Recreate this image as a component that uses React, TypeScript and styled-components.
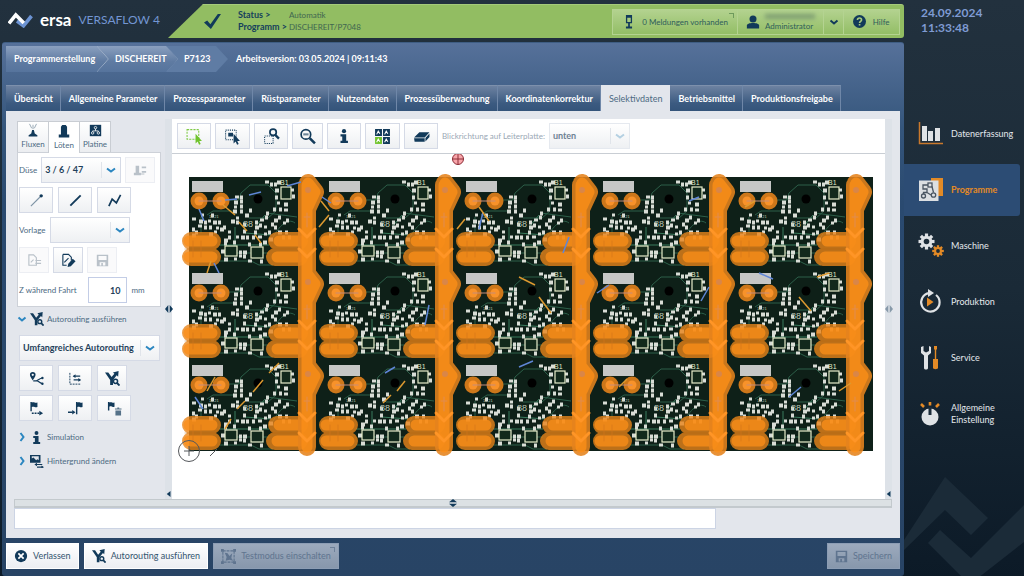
import React from "react";
import styled, { createGlobalStyle, css } from "styled-components";

const navy = "#123a5a";
const blue = "#2b86c0";

const GlobalStyle = createGlobalStyle`
  *, *::before, *::after { box-sizing: border-box; }
  body {
    margin: 0;
    background: #14222f;
    font-family: Lato, "Liberation Sans", sans-serif;
    font-size: 9px;
    line-height: 12px;
    color: #4c6a82;
  }
  button, input, select { font: inherit; color: inherit; margin: 0; }
  svg { display: block; flex: none; }
`;

/* ---------- Shell ---------- */

const Shell = styled.div`
  display: grid;
  grid-template-columns: minmax(0, 1fr) 120px;
  min-height: 100vh;
  background: linear-gradient(#22313e, #1a2a37 50%, #0c1a27);
`;

const MainColumn = styled.div`
  display: flex;
  flex-direction: column;
  min-width: 0;
  padding: 4px 0 2px 2px;
`;

const Header = styled.header`
  display: flex;
  height: 34px;
  margin-bottom: 4px;
`;

const Brand = styled.div`
  display: flex;
  align-items: center;
  width: 166px;
  padding-left: 6px;
  padding-bottom: 2px;
  color: #fff;
  font-size: 17px;
  line-height: 20px;
  font-weight: 700;
  white-space: nowrap;
`;

const BrandName = styled.span`
  margin: 0 7px;
`;

const Product = styled.span`
  color: #7396d2;
  font-size: 12px;
  font-weight: 400;
`;

const StatusBar = styled.div`
  flex: 1;
  display: flex;
  align-items: center;
  padding: 0 4px 0 36px;
  background: #92bd62;
  border-top: 1px solid #a5ca7b;
  border-radius: 0 3px 3px 0;
  clip-path: polygon(35px 0, 100% 0, 100% 100%, 0 100%);
`;

const StatusList = styled.dl`
  display: grid;
  grid-template-columns: 51px auto;
  margin: 0 auto 0 17px;
  padding-bottom: 2px;
  color: #3f6650;

  dt { color: #153f5c; font-weight: 700; white-space: nowrap; }
  dd { margin: 0; font-size: 8px; }
`;

const HeaderTools = styled.div`
  display: flex;
  height: 26px;
  border: 1px solid #b4d391;
  background: linear-gradient(#b3d28f, #93be66);
`;

const HeaderButton = styled.button<{ $width: number }>`
  position: relative;
  display: flex;
  align-items: center;
  justify-content: space-evenly;
  width: ${(p) => p.$width}px;
  padding: 0 3px;
  border: 0;
  border-left: 1px solid #b4d391;
  background: none;
  color: #2f5d5a;
  font-size: 8px;
  text-align: left;
  white-space: nowrap;

  &:first-child { border-left: 0; }
`;

const CornerMark = styled.span<{ $tone: string }>`
  position: absolute;
  top: 3px;
  right: 3px;
  width: 5px;
  height: 5px;
  border: solid ${(p) => p.$tone};
  border-width: 1px 1px 0 0;
`;

const HiddenName = styled.span`
  display: block;
  width: 50px;
  height: 5px;
  margin: 2px 0 1px;
  background: #7f9f72;
  filter: blur(2px);
`;

const Window = styled.main`
  flex: 1;
  display: flex;
  flex-direction: column;
  padding: 3px 4px 7px;
  border-radius: 3px;
  background: linear-gradient(#56719a, #35567c 16%, #2a4a70 30%, #284465);
  border: solid #3f5e84;
  border-width: 1px 0 0;
`;

/* ---------- Breadcrumb and tabs ---------- */

const Breadcrumb = styled.nav`
  display: flex;
  align-items: center;
  height: 26px;
  margin-bottom: 13px;
  color: #fff;
  font-weight: 700;
`;

const Crumb = styled.a<{ $width: number; $level: number }>`
  display: flex;
  align-items: center;
  justify-content: space-between;
  width: ${(p) => p.$width}px;
  height: 26px;
  margin-right: -12px;
  padding-left: ${(p) => (p.$level === 0 ? 8 : 18)}px;
  z-index: ${(p) => 3 - p.$level};
  color: #fff;
  text-decoration: none;
  background: ${(p) =>
    p.$level === 2 ? "#5f7ca4" : "linear-gradient(#8ba0bf, #5f7ba2 60%, #56749d)"};
  clip-path: polygon(0 0, calc(100% - 12px) 0, 100% 50%, calc(100% - 12px) 100%, 0 100%);
`;

const Version = styled.span`
  margin-left: 20px;
`;

const TabBar = styled.div`
  display: flex;
  height: 26px;
`;

const Tab = styled.button<{ $active?: boolean }>`
  padding: 0 7px 0 8px;
  border: 0;
  border-top: 1px solid #7d90ac;
  border-right: 1px solid #6f87a8;
  background: linear-gradient(#6d82a1, #3b5a80 70%, #34547a);
  color: #fff;
  font-weight: 700;
  white-space: nowrap;

  ${(p) =>
    p.$active &&
    css`
      background: #e3e6ec;
      border-color: #e3e6ec;
      color: #4c6a82;
      font-weight: 400;
    `}
`;

/* ---------- Work area ---------- */

const Content = styled.section`
  flex: 1;
  display: flex;
  flex-direction: column;
  padding: 8px 8px 9px;
  background: #e3e6ec;
`;

const Workspace = styled.div`
  flex: 1;
  display: grid;
  grid-template-columns: 151px 7px minmax(0, 1fr) 7px;
`;

const Splitter = styled.div`
  position: relative;
  display: flex;
  align-items: center;
  justify-content: center;
  background: #dde2e8;
`;

const SplitterEnd = styled.span`
  position: absolute;
  bottom: 2px;
  left: 1px;
`;

const SidePanel = styled.aside`
  padding: 2px 4px 0 3px;
`;

const ToolTabs = styled.div`
  display: flex;
  height: 31px;
`;

const ToolTab = styled.button<{ $active?: boolean }>`
  display: flex;
  flex-direction: column;
  align-items: center;
  justify-content: flex-end;
  gap: 1px;
  width: 32px;
  height: ${(p) => (p.$active ? 32 : 31)}px;
  padding: 0 0 2px;
  border: 1px solid #c9cdd3;
  border-bottom: 0;
  margin-right: -1px;
  background: ${(p) => (p.$active ? "#fff" : "linear-gradient(#fff, #eceef1)")};
  z-index: ${(p) => (p.$active ? 1 : 0)};
  font-size: 8px;

  svg { color: ${navy}; }
`;

const ToolBox = styled.div`
  display: flex;
  flex-direction: column;
  gap: 4px;
  padding: 4px 1px 3px;
  border: 1px solid #cdd1d8;
  background: #fff;
`;

const Row = styled.div<{ $gap?: number }>`
  display: flex;
  align-items: center;
  gap: ${(p) => p.$gap ?? 5}px;
  min-height: 26px;
  font-size: 8px;
`;

const IconButton = styled.button<{ $width?: number }>`
  display: flex;
  flex: none;
  align-items: center;
  justify-content: center;
  width: ${(p) => p.$width ?? 34}px;
  height: 26px;
  padding: 0;
  border: 1px solid #d5dae6;
  background: linear-gradient(#fff, #eef0f3);
  color: ${navy};

  &:disabled { border-color: #eceef3; background: #fafafb; color: #b9c1c9; }
`;

const SelectBox = styled.span<{ $width: number }>`
  display: grid;
  grid-template-columns: minmax(0, 1fr) 20px;
  align-items: center;
  justify-items: center;
  width: ${(p) => p.$width}px;
  height: 26px;

  select {
    grid-area: 1 / 1 / 2 / 3;
    width: 100%;
    height: 100%;
    padding: 0 22px 0 3px;
    appearance: none;
    border: 1px solid #d5dae6;
    border-radius: 0;
    background: linear-gradient(#fff, #eef0f3);
    color: #1f3f5a;
    font-size: 9px;
    font-weight: 700;
    opacity: 1;
  }

  select:disabled { color: #6e8294; border-color: #e5e9ef; }

  svg { grid-area: 1 / 2; pointer-events: none; }
`;

const DepthInput = styled.input`
  width: 39px;
  height: 26px;
  margin-left: 6px;
  padding: 0 5px;
  border: 1px solid #c3cde6;
  background: #fff;
  color: #1f3f5a;
  font-size: 9px;
  font-weight: 700;
  text-align: right;
`;

const Disclosure = styled.button`
  display: grid;
  grid-template-columns: 10px 14px auto;
  gap: 3px;
  align-items: center;
  justify-content: start;
  width: 100%;
  height: 24px;
  padding: 0;
  border: 0;
  background: none;
  font-size: 8px;

  svg { color: ${navy}; }
`;

const RoutingTools = styled.div`
  display: flex;
  flex-direction: column;
  gap: 4px;
  padding: 4px 0 4px 2px;
`;

/* ---------- Board view ---------- */

const BoardView = styled.div`
  display: flex;
  flex-direction: column;
  background: #fff;
`;

const BoardToolbar = styled.div`
  display: flex;
  align-items: center;
  gap: 4px;
  height: 35px;
  padding: 0 5px;
  border-bottom: 1px solid #c9ced4;
  font-size: 8px;
  color: #9aa8b5;
  white-space: nowrap;
`;

const BoardCanvas = styled.svg`
  width: 100%;
  height: auto;
`;

const MessageSplitter = styled.div`
  display: flex;
  align-items: center;
  justify-content: center;
  height: 9px;
  border: 1px solid #c3c9cd;
  border-bottom-width: 2px;
  background: #dce1e4;
`;

const MessageInput = styled.input`
  width: 80%;
  height: 21px;
  padding: 0 5px;
  border: 1px solid #ccd4e4;
  background: #fff;
`;

const Footer = styled.footer`
  display: flex;
  gap: 5px;
  padding-top: 5px;
`;

const FooterButton = styled.button`
  position: relative;
  display: flex;
  align-items: center;
  gap: 5px;
  height: 26px;
  padding: 0 7px;
  border: 1px solid #fff;
  background: linear-gradient(#fff, #eceef2);
  color: #34556f;
  white-space: nowrap;

  svg { color: ${navy}; }
  &:disabled svg { color: inherit; }
  &:disabled { border-color: #8c9db4; background: linear-gradient(#9caabd, #8797ac); color: #5f748f; }
  &:last-child { margin-left: auto; }
`;

/* ---------- Right navigation ---------- */

const Sidebar = styled.aside`
  display: flex;
  flex-direction: column;
`;

const Clock = styled.time`
  height: 108px;
  padding: 5px 0 0 17px;
  color: #7f9bd3;
  font-size: 12px;
  line-height: 15px;
  font-weight: 700;

  span { display: block; }
`;

const NavList = styled.nav`
  display: flex;
  flex-direction: column;
  gap: 4px;
  padding-right: 4px;
`;

const NavLink = styled.a<{ $active?: boolean }>`
  display: grid;
  grid-template-columns: 26px 1fr;
  gap: 7px;
  align-items: center;
  height: 52px;
  padding-left: 14px;
  border-radius: 0 3px 3px 0;
  background: ${(p) => (p.$active ? "#2c4c74" : "none")};
  color: ${(p) => (p.$active ? "#e38a26" : "#e4e8ec")};
  font-weight: ${(p) => (p.$active ? 700 : 400)};
  text-decoration: none;
`;

const Watermark = styled.svg`
  width: 100%;
  margin-top: auto;
`;

/* ---------- Icons ---------- */

const Ico = ({
  s = 14,
  v = 16,
  c = "currentColor",
  children,
}: {
  s?: number;
  v?: number;
  c?: string;
  children: React.ReactNode;
}) => (
  <svg width={s} height={s} viewBox={`0 0 ${v} ${v}`} fill={c} aria-hidden="true">
    {children}
  </svg>
);

const line = { fill: "none", stroke: "currentColor", strokeWidth: 1.6 };

const Chevron = ({ dir = "down", c = blue, s = 10 }: { dir?: string; c?: string; s?: number }) => (
  <Ico s={s} v={10}>
    <path
      d={dir === "down" ? "M1.5 3.5 5 6.5 8.5 3.5" : "M3.5 1 6.5 5 3.5 9"}
      fill="none"
      stroke={c}
      strokeWidth="2"
    />
  </Ico>
);

const CrumbEdge = () => (
  <svg width="12" height="26" viewBox="0 0 12 26" aria-hidden="true">
    <path d="M0 0 11.500 13 0 26" fill="none" stroke="#a3b4cb" />
  </svg>
);

const SelectArrow = ({ c }: { c?: string }) => (
  <svg width="20" height="16" viewBox="0 0 20 16" aria-hidden="true">
    <path d="M.5 0V16" stroke="#e0e4ea" />
    <path d="M6 6.500 10 9.500 14 6.500" fill="none" stroke={c ?? blue} strokeWidth="2" />
  </svg>
);

const RouteIcon = ({ s = 14 }: { s?: number }) => (
  <Ico s={s}>
    <path d="M0 1.500h3.500L7 6.500l3-3.500-1.500-1.500L14.500 0 14 6l-1.500-1.500L8.500 9.500V15H5.500V9.500z" />
    <circle cx="11.200" cy="11" r="2.200" {...line} />
    <path d="m12.800 12.800 2.700 2.700" {...line} strokeWidth="2" />
  </Ico>
);

const InfoIcon = ({ s = 13 }: { s?: number }) => (
  <Ico s={s}>
    <circle cx="8" cy="2.500" r="2.400" />
    <path d="M4 6h6.500v7.500h2V16H4v-2.500h2V8.500H4z" />
  </Ico>
);

const SaveIcon = () => (
  <Ico s={13}>
    <path d="M1 1h14v14H1zm2 1.500v5h10v-5zm1.500 7.500v4h2v-3h2v3h3v-4z" fillRule="evenodd" />
  </Ico>
);

const FluxIcon = () => (
  <Ico s={14}>
    <path d="M7 8h2l1 4 3 2v1.500H3V14l3-2z" />
    <path d="M8 7V2M6.500 6 4 1M9.500 6 12 1" fill="none" stroke="#8ea0ae" />
  </Ico>
);

const SolderIcon = () => (
  <Ico s={14}>
    <path d="M4.500 3 6 1h4l1.500 2v9H14v3.500H2V12h2.500z" />
  </Ico>
);

const BoardIcon = () => (
  <Ico s={13}>
    <path d="M1 1h14v14H1z" />
    <g fill="none" stroke="#fff">
      <circle cx="8" cy="4.500" r="1.500" />
      <circle cx="4.500" cy="11" r="1.500" />
      <circle cx="11.500" cy="11" r="1.500" />
      <path d="M8 6v2.500H4.500v1M8 8.500h3.500v1" />
    </g>
  </Ico>
);

const NozzleSwapIcon = () => (
  <Ico s={14}>
    <path d="M3 3h4v8h2v3H1v-3h2zM10 4h5v2h-5zM10 9h5v2h-5zM9 12h4v1H9z" />
  </Ico>
);

const PointLineIcon = () => (
  <Ico s={15}>
    <path d="M2 14 12 4" fill="none" stroke="#7d93a5" strokeWidth="1.200" />
    <circle cx="13" cy="3" r="1.800" />
  </Ico>
);

const LineIcon = () => (
  <Ico s={15}>
    <path d="M2.500 13.500 13.500 2.500" {...line} strokeWidth="2" />
  </Ico>
);

const PolylineIcon = () => (
  <Ico s={15}>
    <path d="M2 14 5.500 6.500 10 10.500 14.500 2" {...line} strokeWidth="1.800" />
  </Ico>
);

const DocSwapIcon = () => (
  <Ico s={15}>
    <path d="M2 2h5l3 3v8H2z" {...line} strokeWidth="1.200" />
    <path d="M9 8h6M9 11h6M4 10l3-3" {...line} strokeWidth="1.200" />
  </Ico>
);

const DocEditIcon = () => (
  <Ico s={15}>
    <path d="M2 1.500h6l3 3V8M2 1.500V13h4" {...line} strokeWidth="1.200" />
    <path d="M3.500 10 8 5.500" {...line} strokeWidth="1.200" />
    <path d="m7 15 .8-3.500L12.500 6l3 2.700-5 5.300z" />
  </Ico>
);

const PinRouteIcon = () => (
  <Ico s={15}>
    <path d="M4 1a3 3 0 0 1 3 3c0 2-3 6-3 6S1 6 1 4a3 3 0 0 1 3-3zm0 1.800a1.200 1.200 0 1 0 0 2.400 1.200 1.200 0 0 0 0-2.400z" fillRule="evenodd" />
    <path d="M4.500 10.500h3c2 0 3.500-3 7-3M8.500 10.500c2 0 3 3 6 3" {...line} strokeWidth="1.200" />
    <circle cx="14.300" cy="7.500" r="1.300" />
    <circle cx="14.300" cy="13.500" r="1.300" />
  </Ico>
);

const AxisSwapIcon = () => (
  <Ico s={15}>
    <path d="M2 2v12h12" {...line} strokeWidth="1" strokeDasharray="2 1" />
    <path d="M6 5.500h7M6 9.500h7" {...line} strokeWidth="1.200" />
    <path d="M5 5.500 8 3.500v4zM14 9.500l-3-2v4z" />
  </Ico>
);

const FlagIcon = ({ kind }: { kind: "start" | "end" | "delete" }) => (
  <Ico s={15}>
    {kind === "start" && (
      <>
        <path d="M1.500 1H3v10H1.500zM3 1.500c3-1 3 1 6 0v5c-3 1-3-1-6 0z" />
        <path d="M3 13h9" {...line} strokeDasharray="2 1" />
        <path d="m15 13-4-2.500v5z" />
      </>
    )}
    {kind === "end" && (
      <>
        <path d="M8.500 1H10v13H8.500zM10 1.500c3-1 3 1 5.500 0v5c-3 1-3-1-5.500 0z" />
        <path d="M0 12h5" {...line} />
        <path d="m8 12-3.500-2.500v5z" />
      </>
    )}
    {kind === "delete" && (
      <>
        <path d="M1 1h1.500v9H1zM2.500 1.500c3-1 3 1 5.500 0v4.500c-3 1-3-1-5.500 0z" />
        <path d="M8.500 8h7v1h-7zM9 10h6v5.500H9zM11 7h2v1h-2z" opacity=".7" />
      </>
    )}
  </Ico>
);

const ImageSwapIcon = () => (
  <Ico s={14}>
    <path d="M0 1h12v9H0zm2 1.500V5l2-1 3 3 1.500-1L10 7V2.500z" fillRule="evenodd" />
    <path d="M7 12h7M8 15h7" {...line} strokeWidth="1.200" />
    <path d="m5 12 3-2v4zM16 15l-3-2v3z" />
  </Ico>
);

const Pointer = ({ c }: { c?: string }) => (
  <path d="M9 5.500v9l2-1.700 1.300 2.900 1.500-.7-1.300-2.800H15z" fill={c ?? "currentColor"} />
);

const SelectIcon = () => (
  <Ico s={17} c="#6fc32b">
    <path d="M1 1.500h11v9H1z" fill="none" stroke="#7fca45" strokeDasharray="2 1" />
    <Pointer c="#6fc32b" />
  </Ico>
);

const SelectPartIcon = () => (
  <Ico s={17}>
    <path d="M1.500 2h10v9h-10z" fill="none" stroke="currentColor" strokeDasharray="1 1" />
    <path d="M4 4.500h4.500v3.500H4z" />
    <Pointer />
  </Ico>
);

const ZoomAreaIcon = () => (
  <Ico s={17}>
    <path d="M1.500 7.500h8v7h-8z" fill="none" stroke="currentColor" strokeDasharray="1 1" />
    <circle cx="9.500" cy="4" r="3" {...line} />
    <path d="m11.500 6.500 3.500 3.500" {...line} strokeWidth="2.200" />
  </Ico>
);

const ZoomFitIcon = () => (
  <Ico s={17}>
    <circle cx="6.500" cy="6" r="4.500" {...line} />
    <path d="m10 9.500 5 5" {...line} strokeWidth="2.400" />
    <path d="M4 6h5" {...line} strokeWidth="2" opacity=".6" />
  </Ico>
);

const PanelIcon = () => (
  <Ico s={17}>
    <path d="M1 1h6.500v6.500H1zM8.500 1H15v6.500H8.500zM8.500 8.500H15V15H8.500z" />
    <path d="M1 8.500h6.500V15H1z" fill="#6fc32b" />
    <path
      d="M2.500 6 4 3l1.500 2.500M10 6l1.500-3L13 5.500M10 13.500l1.500-3L13 13M2.500 13.500l1.500-3L5.500 13"
      fill="none"
      stroke="#fff"
    />
  </Ico>
);

const EraserIcon = () => (
  <Ico s={17}>
    <path d="M6 4h9.500l-4.500 5H1zM1 9.600h10v3.400H1.500zM11.700 9.500l3.800-4.300v3.300l-3.800 4.300z" />
  </Ico>
);

const CloseIcon = () => (
  <Ico s={14}>
    <circle cx="8" cy="8" r="7" />
    <path d="m5 5 6 6m0-6-6 6" stroke="#fff" strokeWidth="2" />
  </Ico>
);

const TestIcon = () => (
  <Ico s={15}>
    <path d="M2 2h12v12H2z" {...line} strokeDasharray="3 1" strokeWidth="1.200" />
    <path d="M0 0h3v3H0zM13 0h3v3h-3zM0 13h3v3H0zM13 13h3v3h-3zM4 4l3 .5 2 3 3-3-1 5 2 3-4-1-4 1 1-4z" />
  </Ico>
);

const Arrows = ({ dir, c = navy }: { dir: "h" | "v"; c?: string }) => (
  <Ico s={8} v={8} c={c}>
    {dir === "h" ? (
      <path d="M3.300 0v8L0 4zM4.700 0v8L8 4z" />
    ) : (
      <path d="M0 3.300h8L4 0zM0 4.700h8L4 8z" />
    )}
  </Ico>
);

const LogoIcon = () => (
  <svg width="25" height="16" viewBox="0 0 25 16" aria-hidden="true">
    <path d="m9 9 6.500 4.800L23.500 4" fill="none" stroke="#6c93d3" strokeWidth="3.600" />
    <path d="M1 11.500 7.800 3l8 8" fill="none" stroke="#fff" strokeWidth="3.600" />
  </svg>
);

const gearTeeth = (cx: number, cy: number, r: number) =>
  [0, 45, 90, 135].map((a) => (
    <rect
      key={a}
      x={cx - r / 5}
      y={cy - r}
      width={(r / 5) * 2}
      height={r * 2}
      transform={`rotate(${a} ${cx} ${cy})`}
    />
  ));

const navIcons: Record<string, React.ReactNode> = {
  data: (
    <Ico s={26} v={26} c="#dfe2e5">
      <path d="M4 5h5v15H4zM10 10h5v10h-5zM17 7h5v13h-5z" />
      <path d="M1.500 1v21.500H25" fill="none" stroke="#c9792c" strokeWidth="1.500" />
    </Ico>
  ),
  programs: (
    <Ico s={26} v={26} c="#dcdfe2">
      <path d="M13 1h12v18H13z" fill="#e38a26" />
      <path d="M1 3.500h19.500V24H1z" />
      <g fill="none" stroke="#4a5562" strokeWidth="1.300">
        <rect x="10" y="6" width="4" height="4" />
        <circle cx="5.500" cy="19" r="2" />
        <circle cx="15.500" cy="18" r="2.200" />
        <path d="M10 8H5v4h4v3.500H5.500V17M14 9.500l1.500 6M9 15.500l4 2.500" />
      </g>
    </Ico>
  ),
  machine: (
    <Ico s={26} v={26} c="#dfe2e5">
      {gearTeeth(8.500, 8.500, 8)}
      <circle cx="8.500" cy="8.500" r="5.800" />
      <circle cx="8.500" cy="8.500" r="2.800" fill="#1b2b38" />
      <g fill="#e38a26">
        {gearTeeth(20, 18, 5.800)}
        <circle cx="20" cy="18" r="4" />
      </g>
      <circle cx="20" cy="18" r="1.900" fill="#1b2b38" />
    </Ico>
  ),
  production: (
    <Ico s={26} v={26} c="#dfe2e5">
      <path d="M18 6a9.200 9.200 0 1 1-7-1.800" fill="none" stroke="#dfe2e5" strokeWidth="2.200" />
      <path d="M10 0v8l6-4z" />
      <path d="M9 8.500v9l6.500-4.500z" fill="#e38a26" />
    </Ico>
  ),
  service: (
    <Ico s={26} v={26} c="#dfe2e5">
      <path d="M3 2v6l3 2.500V23c0 2 4 2 4 0V10.500L13 8V2l-2-1v5L8 7.500 5.500 6V1z" />
      <path d="M16 1h3v3l-.8 1v9h1.800v9c0 1.500-5 1.500-5 0v-9h1.800V5l-.8-1z" fill="#e38a26" />
    </Ico>
  ),
  settings: (
    <Ico s={26} v={26} c="#dfe2e5">
      <circle cx="12" cy="16" r="8.500" />
      <path d="M10.500 6h3v8h-3z" fill="#1b2b38" />
      <path d="M12 1v3.500M3 3l3 3M21 3l-3 3" stroke="#e38a26" strokeWidth="2.600" />
    </Ico>
  ),
};

/* ---------- Board drawing ---------- */

const pads: [number, number][] = [
  [78, 5], [83, 7], [87, 7], [90, 5], [104, 13], [105, 19], [88, 13], [88, 20], [90, 26], [97, 27],
  [86, 32], [92, 32], [97, 33], [53, 20], [53, 24], [47, 25], [47, 30], [53, 29], [46, 34], [53, 34],
  [49, 41], [44, 44], [49, 45], [68, 45], [73, 43], [79, 36], [78, 40], [68, 50], [77, 50], [72, 48],
  [12, 44], [17, 45], [21, 44], [26, 45], [31, 45], [36, 50], [11, 49], [17, 50], [22, 50], [33, 52],
  [41, 55], [41, 60], [37, 63], [46, 65], [49, 60], [54, 60], [59, 60], [65, 60], [71, 60], [81, 55],
  [87, 50], [91, 55], [96, 46], [99, 43], [87, 43], [91, 40], [77, 57], [76, 65], [56, 54], [56, 47],
  [5, 42], [5, 52], [8, 55], [5, 58], [14, 38], [24, 38], [58, 38], [37, 66], [47, 82], [37, 82],
  [61, 67], [72, 67], [61, 84], [73, 84], [52, 75], [56, 75], [52, 79], [56, 79], [34, 74], [98, 55],
  [27, 55], [22, 57], [84, 47], [62, 33], [48, 20], [95, 60], [101, 60], [82, 62], [29, 51], [67, 55],
];

const BoardCell = () => (
  <g id="cell">
    <g fill="none" stroke="#2c5f49" strokeWidth="1">
      <path d="M40 23 50 23 52 16 61 8H79L87 16V34L79 41H60M18 38 24 34H46M30 84H62L70 88H84M40 76H80M12 40V56M78 36 108 40M84 60C90 50 98 40 106 46" />
      <path d="M30 68H80M56 56 82 58M76 38 66 50M46 50V70" stroke="#397a5c" />
    </g>
    <circle cx="69" cy="22" r="4.500" fill="#000" />
    <rect x="3" y="4" width="31" height="11" fill="#c6c7c6" />
    <g fill="#d9ddd6">
      {pads.map(([x, y], i) => (
        <rect key={i} x={x - 2} y={y - 1.500} width={i % 3 ? 3 : 4} height={i % 4 ? 4 : 3} />
      ))}
    </g>
    <g fill="#12291c" stroke="#e8eecb" strokeWidth="1.200">
      <rect x="92" y="10" width="10" height="12" />
      <rect x="36" y="69" width="12" height="10" />
      <rect x="62" y="70" width="12" height="11" />
    </g>
    <g fill="#bcc8b4" fontFamily="Liberation Sans, sans-serif">
      <text x="91" y="8" fontSize="7" fill="#dfe6c4">B1</text>
      <text x="54" y="50" fontSize="9">88</text>
      <text x="20" y="41" fontSize="4">11 21</text>
    </g>
  </g>
);

const SolderCell = () => (
  <g id="solder">
    <g fill="none" stroke="#e8851a" strokeOpacity=".8" strokeLinecap="round" strokeWidth="18">
      <path d="M2 64H23M2 80H23M88 64H110M86 80H110" />
    </g>
    <g fill="none" stroke="#fc8f18" strokeOpacity=".75" strokeLinecap="round" strokeWidth="11">
      <path d="M0 64H23M0 80H23M90 64H110M88 80H110" />
    </g>
    <path d="M-4 72H28M82 72H110" stroke="#b3620f" strokeWidth="1" opacity=".45" />
    <path d="M4 64V80M12 64V80" stroke="#d3761a" strokeWidth="1" opacity=".6" />
    <g fill="#e8831a" fillOpacity=".88">
      <circle cx="10" cy="24" r="8.500" />
      <circle cx="32" cy="24" r="8.500" />
    </g>
    <g fill="#f8922a">
      <circle cx="10" cy="24" r="4.500" />
      <circle cx="32" cy="24" r="4.500" />
    </g>
    <path d="M10 24H32" stroke="#c58c78" strokeWidth="1.200" />
  </g>
);

const columns = [0, 1, 2, 3, 4];
const rows = [0, 1, 2];
const railPath =
  "M118 8V270" +
  rows.map((r) => `M119 ${r * 92 + 6}L126 ${r * 92 + 15}L119 ${r * 92 + 30}`).join("");

const strokesBlue: [number, number, number, number][] = [
  [36, 23, 48, 22], [60, 18, 72, 15], [98, 9, 112, 5], [10, 32, 15, 44], [133, 20, 142, 26],
  [294, 35, 290, 52], [510, 20, 500, 24], [420, 108, 408, 116], [196, 196, 206, 190], [6, 220, 14, 232],
  [25, 86, 30, 96], [240, 128, 236, 148], [380, 60, 374, 76], [520, 110, 512, 124], [600, 220, 612, 210],
  [570, 96, 584, 102], [330, 190, 344, 184],
];
const strokesGold: [number, number, number, number][] = [
  [34, 28, 46, 38], [50, 45, 58, 54], [66, 58, 72, 66], [130, 50, 140, 38], [132, 24, 140, 34],
  [268, 52, 276, 42], [290, 30, 300, 44], [22, 84, 18, 96], [64, 215, 74, 203], [80, 196, 90, 186],
  [48, 232, 56, 224], [36, 252, 42, 242], [208, 214, 216, 204], [194, 226, 202, 218], [330, 100, 346, 108],
  [350, 120, 362, 136], [430, 210, 438, 202], [628, 100, 640, 96], [650, 214, 662, 206], [556, 30, 566, 24],
  [610, 120, 622, 134], [18, 214, 26, 200],
];

const Board = () => (
  <BoardCanvas viewBox="0 0 713 345" preserveAspectRatio="xMinYMin meet" role="img" aria-label="Leiterplatte">
    <defs>
      <BoardCell />
      <SolderCell />
      <clipPath id="board-edge">
        <rect width="684" height="274" />
      </clipPath>
    </defs>
    <g stroke="#8d2f38" fill="none">
      <circle cx="286" cy="5" r="5.500" fill="#f8a5aa" />
      <path d="M280 5H292M286 -1V11" />
    </g>
    <g transform="translate(17 23)">
      <rect width="684" height="274" fill="#0e2018" />
      <g clipPath="url(#board-edge)">
        {rows.map((r) =>
          columns.map((c) => <use key={`${r}-${c}`} href="#cell" x={c * 137} y={r * 92} />)
        )}
      </g>
      {columns.map((c) => (
        <g key={c} transform={`translate(${c * 137} 0)`} fill="none" strokeLinecap="round" strokeLinejoin="round">
          {rows.map((r) => (
            <use key={r} href="#solder" y={r * 92} />
          ))}
          <path d={railPath} stroke="#e5831d" strokeOpacity=".88" strokeWidth="18" />
          <path d={railPath} stroke="#fb8e18" strokeOpacity=".8" strokeWidth="11" />
          {rows.map((r) => (
            <g key={r} transform={`translate(0 ${r * 92})`}>
              <path d="M110 52 118 60 126 52M110 72 118 80 126 72" stroke="#ff9526" strokeWidth="3" />
              <path d="M118 36V50M115 40H121" stroke="#e08c50" strokeWidth="1" />
              <circle cx="119" cy="13" r="3" fill="#d98648" />
            </g>
          ))}
        </g>
      ))}
      <g stroke="#5f86d6" strokeWidth="1.500">
        {strokesBlue.map(([a, b, c, d], i) => (
          <line key={i} x1={a} y1={b} x2={c} y2={d} />
        ))}
      </g>
      <g stroke="#dd9a30" strokeWidth="1.500">
        {strokesGold.map(([a, b, c, d], i) => (
          <line key={i} x1={a} y1={b} x2={c} y2={d} />
        ))}
      </g>
    </g>
    <g fill="none" stroke="#55585c">
      <circle cx="17" cy="297" r="10.500" />
      <path d="M12 297H22M17 292V302M38 302 45 295" />
    </g>
  </BoardCanvas>
);

/* ---------- Page ---------- */

const tabs = [
  "Übersicht", "Allgemeine Parameter", "Prozessparameter", "Rüstparameter", "Nutzendaten",
  "Prozessüberwachung", "Koordinatenkorrektur", "Selektivdaten", "Betriebsmittel", "Produktionsfreigabe",
];

const navItems = [
  { id: "data", label: "Datenerfassung" },
  { id: "programs", label: "Programme" },
  { id: "machine", label: "Maschine" },
  { id: "production", label: "Produktion" },
  { id: "service", label: "Service" },
  { id: "settings", label: "Allgemeine Einstellung" },
];

const boardTools = [
  { label: "Auswahl", icon: <SelectIcon /> },
  { label: "Bauteil auswählen", icon: <SelectPartIcon />, width: 35 },
  { label: "Bereich vergrößern", icon: <ZoomAreaIcon /> },
  { label: "Ansicht anpassen", icon: <ZoomFitIcon />, width: 31 },
  { label: "Information", icon: <InfoIcon s={14} /> },
  { label: "Nutzen", icon: <PanelIcon />, width: 35 },
  { label: "Löschen", icon: <EraserIcon /> },
];

export default function App() {
  return (
    <>
      <GlobalStyle />
      <Shell>
        <MainColumn>
          <Header>
            <Brand>
              <LogoIcon />
              <BrandName>ersa</BrandName>
              <Product>VERSAFLOW 4</Product>
            </Brand>
            <StatusBar>
              <Ico s={17} c={navy}>
                <path d="m0 9 3-2 3 3.500L13 1h3L6.500 15z" />
              </Ico>
              <StatusList>
                <dt>Status &gt;</dt>
                <dd>Automatik</dd>
                <dt>Programm &gt;</dt>
                <dd>DISCHEREIT/P7048</dd>
              </StatusList>
              <HeaderTools>
                <HeaderButton $width={124}>
                  <Ico s={14} c={navy}>
                    <path d="M4.500 0h7v9.500H9V13h2.500v2.500h-7V13H7V9.500H4.500zM6 3v5h4V3z" fillRule="evenodd" />
                  </Ico>
                  0 Meldungen vorhanden
                  <CornerMark $tone="#6e9a5c" />
                </HeaderButton>
                <HeaderButton $width={86}>
                  <Ico s={14} c={navy}>
                    <circle cx="8" cy="4.500" r="4" />
                    <path d="M1 15.500V12c0-2 3-3 7-3s7 1 7 3v3.500z" />
                  </Ico>
                  <span>
                    <HiddenName />
                    Administrator
                  </span>
                </HeaderButton>
                <HeaderButton $width={20} aria-label="Benutzermenü">
                  <Chevron c={navy} />
                </HeaderButton>
                <HeaderButton $width={56}>
                  <Ico s={13} c={navy}>
                    <circle cx="8" cy="8" r="8" />
                    <path
                      d="M5.500 6.200C5.500 2.800 10.500 3 10.500 6c0 1.800-2.400 1.800-2.400 3.800M8.100 11v2"
                      fill="none"
                      stroke="#a7ca7f"
                      strokeWidth="2"
                    />
                  </Ico>
                  Hilfe
                </HeaderButton>
              </HeaderTools>
            </StatusBar>
          </Header>

          <Window>
            <Breadcrumb aria-label="Pfad">
              <Crumb href="#programmerstellung" $width={103} $level={0}>
                Programmerstellung
                <CrumbEdge />
              </Crumb>
              <Crumb href="#dischereit" $width={81} $level={1}>
                DISCHEREIT
                <CrumbEdge />
              </Crumb>
              <Crumb href="#p7123" $width={62} $level={2}>P7123</Crumb>
              <Version>Arbeitsversion: 03.05.2024 | 09:11:43</Version>
            </Breadcrumb>
            <TabBar role="tablist">
              {tabs.map((t) => (
                <Tab key={t} role="tab" aria-selected={t === "Selektivdaten"} $active={t === "Selektivdaten"}>
                  {t}
                </Tab>
              ))}
            </TabBar>

            <Content>
              <Workspace>
                <SidePanel>
                  <ToolTabs role="tablist">
                    <ToolTab role="tab"><FluxIcon />Fluxen</ToolTab>
                    <ToolTab role="tab" aria-selected $active><SolderIcon />Löten</ToolTab>
                    <ToolTab role="tab"><BoardIcon />Platine</ToolTab>
                  </ToolTabs>
                  <ToolBox>
                    <Row $gap={4}>
                      <label htmlFor="nozzle">Düse</label>
                      <SelectBox $width={80}>
                        <select id="nozzle"><option>3 / 6 / 47</option></select>
                        <SelectArrow />
                      </SelectBox>
                      <IconButton $width={30} disabled aria-label="Düse wechseln"><NozzleSwapIcon /></IconButton>
                    </Row>
                    <Row>
                      <IconButton aria-label="Punkt"><PointLineIcon /></IconButton>
                      <IconButton aria-label="Linie"><LineIcon /></IconButton>
                      <IconButton aria-label="Polylinie"><PolylineIcon /></IconButton>
                    </Row>
                    <Row>
                      <label htmlFor="template">Vorlage</label>
                      <SelectBox $width={80}>
                        <select id="template"><option></option></select>
                        <SelectArrow />
                      </SelectBox>
                    </Row>
                    <Row $gap={4}>
                      <IconButton $width={30} disabled aria-label="Vorlage zuweisen"><DocSwapIcon /></IconButton>
                      <IconButton $width={30} aria-label="Vorlage bearbeiten"><DocEditIcon /></IconButton>
                      <IconButton $width={30} disabled aria-label="Vorlage speichern"><SaveIcon /></IconButton>
                    </Row>
                    <Row>
                      <label htmlFor="z-travel">Z während Fahrt</label>
                      <DepthInput id="z-travel" defaultValue="10" />
                      mm
                    </Row>
                  </ToolBox>

                  <Disclosure aria-expanded="true">
                    <Chevron />
                    <RouteIcon />
                    Autorouting ausführen
                  </Disclosure>
                  <RoutingTools>
                    <SelectBox $width={141}>
                      <select aria-label="Autorouting-Modus"><option>Umfangreiches Autorouting</option></select>
                      <SelectArrow />
                    </SelectBox>
                    <Row>
                      <IconButton aria-label="Route setzen"><PinRouteIcon /></IconButton>
                      <IconButton aria-label="Achsen tauschen"><AxisSwapIcon /></IconButton>
                      <IconButton $width={30} aria-label="Route suchen"><RouteIcon s={15} /></IconButton>
                    </Row>
                    <Row>
                      <IconButton aria-label="Startpunkt"><FlagIcon kind="start" /></IconButton>
                      <IconButton aria-label="Endpunkt"><FlagIcon kind="end" /></IconButton>
                      <IconButton aria-label="Punkt löschen"><FlagIcon kind="delete" /></IconButton>
                    </Row>
                  </RoutingTools>
                  <Disclosure aria-expanded="false">
                    <Chevron dir="right" />
                    <InfoIcon />
                    Simulation
                  </Disclosure>
                  <Disclosure aria-expanded="false">
                    <Chevron dir="right" />
                    <ImageSwapIcon />
                    Hintergrund ändern
                  </Disclosure>
                </SidePanel>

                <Splitter>
                  <Arrows dir="h" />
                  <SplitterEnd><Ico s={6} v={8} c={navy}><path d="M6 0v8L1 4z" /></Ico></SplitterEnd>
                </Splitter>

                <BoardView>
                  <BoardToolbar>
                    {boardTools.map((t) => (
                      <IconButton key={t.label} $width={t.width} aria-label={t.label}>{t.icon}</IconButton>
                    ))}
                    <label htmlFor="side">Blickrichtung auf Leiterplatte:</label>
                    <SelectBox $width={81}>
                      <select id="side" disabled><option>unten</option></select>
                      <SelectArrow c="#b4d0e2" />
                    </SelectBox>
                  </BoardToolbar>
                  <Board />
                </BoardView>

                <Splitter>
                  <Arrows dir="h" c="#8799a9" />
                  <SplitterEnd><Ico s={6} v={8} c={navy}><path d="M6 0v8L1 4z" /></Ico></SplitterEnd>
                </Splitter>
              </Workspace>
              <MessageSplitter><Arrows dir="v" /></MessageSplitter>
              <MessageInput aria-label="Meldung" />
            </Content>

            <Footer>
              <FooterButton><CloseIcon />Verlassen</FooterButton>
              <FooterButton><RouteIcon />Autorouting ausführen</FooterButton>
              <FooterButton disabled>
                <TestIcon />Testmodus einschalten
                <CornerMark $tone="#6f829a" />
              </FooterButton>
              <FooterButton disabled><SaveIcon />Speichern</FooterButton>
            </Footer>
          </Window>
        </MainColumn>

        <Sidebar>
          <Clock dateTime="2024-09-24T11:33:48">
            <span>24.09.2024</span>
            <span>11:33:48</span>
          </Clock>
          <NavList aria-label="Hauptmenü">
            {navItems.map((n) => (
              <NavLink key={n.id} href={`#${n.id}`} $active={n.id === "programs"}>
                {navIcons[n.id]}
                <span>{n.label}</span>
              </NavLink>
            ))}
          </NavList>
          <Watermark viewBox="0 0 120 102" aria-hidden="true" fill="#1b2b38">
            <path d="M0 64 41 1 84 42 67 59 41 34 0 74z" />
            <path d="M24 67 36 54 67 82 120 29V66L74 102H59z" />
          </Watermark>
        </Sidebar>
      </Shell>
    </>
  );
}
